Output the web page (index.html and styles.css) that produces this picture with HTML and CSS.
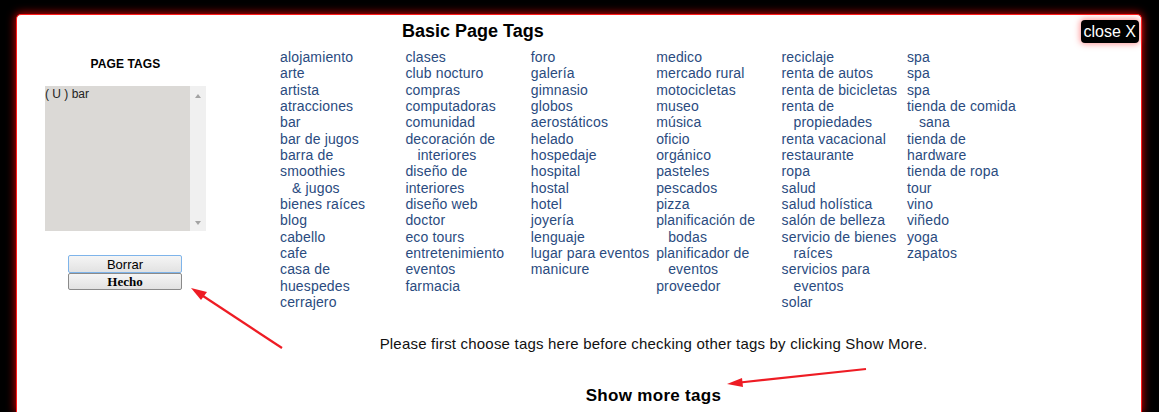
FILE: index.html
```html
<!DOCTYPE html>
<html>
<head>
<meta charset="utf-8">
<title>Basic Page Tags</title>
<link rel="stylesheet" href="styles.css">
</head>
<body>
<div class="panel">
  <button class="close">close X</button>
  <aside class="sidebar">
    <h3 class="side-title">PAGE TAGS</h3>
    <div class="listbox">
      <div class="list-items">( U ) bar</div>
      <div class="scrollbar">
        <span class="arr up"></span>
        <span class="arr down"></span>
      </div>
    </div>
    <div class="buttons">
      <button class="btn btn-borrar">Borrar</button>
      <button class="btn btn-hecho">Hecho</button>
    </div>
  </aside>
  <main class="content">
    <h2 class="title">Basic Page Tags</h2>
    <div class="tags">
      <div class="col">
        <div class="tag">alojamiento</div>
        <div class="tag">arte</div>
        <div class="tag">artista</div>
        <div class="tag">atracciones</div>
        <div class="tag">bar</div>
        <div class="tag">bar de jugos</div>
        <div class="tag">barra de<br>smoothies<span class="cont">&amp; jugos</span></div>
        <div class="tag">bienes raíces</div>
        <div class="tag">blog</div>
        <div class="tag">cabello</div>
        <div class="tag">cafe</div>
        <div class="tag">casa de<br>huespedes</div>
        <div class="tag">cerrajero</div>
      </div>
      <div class="col">
        <div class="tag">clases</div>
        <div class="tag">club nocturo</div>
        <div class="tag">compras</div>
        <div class="tag">computadoras</div>
        <div class="tag">comunidad</div>
        <div class="tag">decoración de<span class="cont">interiores</span></div>
        <div class="tag">diseño de<br>interiores</div>
        <div class="tag">diseño web</div>
        <div class="tag">doctor</div>
        <div class="tag">eco tours</div>
        <div class="tag">entretenimiento</div>
        <div class="tag">eventos</div>
        <div class="tag">farmacia</div>
      </div>
      <div class="col">
        <div class="tag">foro</div>
        <div class="tag">galería</div>
        <div class="tag">gimnasio</div>
        <div class="tag">globos<br>aerostáticos</div>
        <div class="tag">helado</div>
        <div class="tag">hospedaje</div>
        <div class="tag">hospital</div>
        <div class="tag">hostal</div>
        <div class="tag">hotel</div>
        <div class="tag">joyería</div>
        <div class="tag">lenguaje</div>
        <div class="tag">lugar para eventos</div>
        <div class="tag">manicure</div>
      </div>
      <div class="col">
        <div class="tag">medico</div>
        <div class="tag">mercado rural</div>
        <div class="tag">motocicletas</div>
        <div class="tag">museo</div>
        <div class="tag">música</div>
        <div class="tag">oficio</div>
        <div class="tag">orgánico</div>
        <div class="tag">pasteles</div>
        <div class="tag">pescados</div>
        <div class="tag">pizza</div>
        <div class="tag">planificación de<span class="cont">bodas</span></div>
        <div class="tag">planificador de<span class="cont">eventos</span></div>
        <div class="tag">proveedor</div>
      </div>
      <div class="col">
        <div class="tag">reciclaje</div>
        <div class="tag">renta de autos</div>
        <div class="tag">renta de bicicletas</div>
        <div class="tag">renta de<span class="cont">propiedades</span></div>
        <div class="tag">renta vacacional</div>
        <div class="tag">restaurante</div>
        <div class="tag">ropa</div>
        <div class="tag">salud</div>
        <div class="tag">salud holística</div>
        <div class="tag">salón de belleza</div>
        <div class="tag">servicio de bienes<span class="cont">raíces</span></div>
        <div class="tag">servicios para<span class="cont">eventos</span></div>
        <div class="tag">solar</div>
      </div>
      <div class="col">
        <div class="tag">spa</div>
        <div class="tag">spa</div>
        <div class="tag">spa</div>
        <div class="tag">tienda de comida<span class="cont">sana</span></div>
        <div class="tag">tienda de<br>hardware</div>
        <div class="tag">tienda de ropa</div>
        <div class="tag">tour</div>
        <div class="tag">vino</div>
        <div class="tag">viñedo</div>
        <div class="tag">yoga</div>
        <div class="tag">zapatos</div>
      </div>
    </div>
    <p class="note">Please first choose tags here before checking other tags by clicking Show More.</p>
    <p class="more">Show more tags</p>
  </main>
</div>
<svg class="annot" width="1159" height="412" viewBox="0 0 1159 412">
  <line x1="282" y1="348" x2="200" y2="294" stroke="#ee1c24" stroke-width="2.2"/>
  <polygon points="191,288 207,292 201,300" fill="#ee1c24"/>
  <line x1="866" y1="369" x2="740" y2="382.5" stroke="#ee1c24" stroke-width="2.2"/>
  <polygon points="727,384 742,378 743,387" fill="#ee1c24"/>
</svg>
</body>
</html>
```
FILE: styles.css
```css
html, body {
  margin: 0;
  padding: 0;
  background: #000;
  height: 100%;
  overflow: hidden;
}
body {
  font-family: "Liberation Sans", Arial, sans-serif;
  position: relative;
}
.panel {
  position: relative;
  margin: 14px 17px 0 16px;
  height: 398px;
  background: #fff;
  border: 1px solid #ff1a1a;
  border-bottom: 0;
  border-radius: 5px 5px 0 0;
  box-shadow: 0 0 9px 1px rgba(230, 0, 0, 0.85);
  display: flex;
  box-sizing: border-box;
}
.close {
  position: absolute;
  top: 5px;
  right: 2px;
  height: 23px;
  padding: 0 3px;
  background: #000;
  color: #fff;
  border: 0;
  border-radius: 4px;
  font: 16px "Liberation Sans", Arial, sans-serif;
  box-shadow: 0 0 6px 1px rgba(255, 60, 60, 0.55);
}
.sidebar {
  width: 161px;
  margin-left: 28px;
  margin-top: 42px;
  display: flex;
  flex-direction: column;
}
.side-title {
  margin: 0;
  font-size: 12px;
  line-height: 14px;
  font-weight: bold;
  text-align: center;
  color: #000;
  letter-spacing: 0.1px;
}
.listbox {
  margin-top: 15px;
  height: 145px;
  display: flex;
}
.list-items {
  flex: 1;
  background: #dbd9d6;
  font-size: 12px;
  line-height: 14px;
  color: #222;
  padding-top: 1px;
}
.scrollbar {
  width: 16px;
  background: #f0f0f0;
  display: flex;
  flex-direction: column;
  justify-content: space-between;
  align-items: center;
  padding: 8px 0 6px;
  box-sizing: border-box;
}
.arr {
  width: 0;
  height: 0;
  border-left: 3.5px solid transparent;
  border-right: 3.5px solid transparent;
}
.arr.up { border-bottom: 4px solid #a3a3a3; }
.arr.down { border-top: 4px solid #a3a3a3; }
.buttons {
  margin-top: 24px;
  margin-left: 23px;
  width: 114px;
  display: flex;
  flex-direction: column;
}
.btn {
  display: block;
  width: 114px;
  margin: 0;
  padding: 0;
  border-radius: 2px;
  background: linear-gradient(#f5f5f5, #e2e2e2);
  color: #000;
}
.btn-borrar {
  height: 18px;
  border: 1px solid #7eb4ea;
  font: 13px "Liberation Sans", Arial, sans-serif;
  line-height: 15px;
}
.btn-hecho {
  height: 17px;
  border: 1px solid #8a8a8a;
  font: bold 13px "Liberation Serif", "Times New Roman", serif;
  line-height: 14px;
}
.content {
  margin-left: 74px;
  width: 747px;
  padding-top: 6px;
}
.title {
  margin: 0 0 0 122px;
  font-size: 18px;
  line-height: 21px;
  font-weight: bold;
  color: #000;
}
.tags {
  margin-top: 7px;
  display: grid;
  grid-template-columns: repeat(6, 125.4px);
}
.tag {
  font-size: 14px;
  line-height: 16.33px;
  color: #2a4b80;
  letter-spacing: 0.15px;
  white-space: nowrap;
}
.cont {
  display: block;
  padding-left: 12px;
}
.note {
  margin: 25px 0 0;
  text-align: center;
  font-size: 15px;
  line-height: 17px;
  letter-spacing: 0.2px;
  color: #111;
}
.more {
  margin: 34px 0 0;
  text-align: center;
  font-size: 17px;
  line-height: 20px;
  letter-spacing: 0.3px;
  font-weight: bold;
  color: #000;
}
.annot {
  position: absolute;
  left: 0;
  top: 0;
  pointer-events: none;
}
```
